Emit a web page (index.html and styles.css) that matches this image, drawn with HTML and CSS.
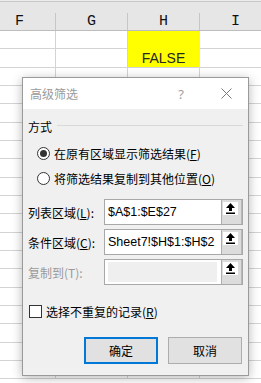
FILE: index.html
```html
<!DOCTYPE html>
<html lang="zh-CN">
<head>
    <meta charset="UTF-8">
    <title>高级筛选</title>
    <link rel="stylesheet" href="styles.css">
</head>
<body>
  <div class="sheet">
    <div class="sheet-top"></div>
    <div class="col-head">
      <div class="ch">F</div><div class="ch">G</div><div class="ch">H</div><div class="ch">I</div>
    </div>
    <div class="row"><div class="cell"></div><div class="cell"></div><div class="cell fill first"></div><div class="cell"></div></div>
    <div class="row"><div class="cell"></div><div class="cell"></div><div class="cell fill cell-text">FALSE</div><div class="cell"></div></div>
    <div class="row"><div class="cell"></div><div class="cell"></div><div class="cell"></div><div class="cell"></div></div>
    <div class="row"><div class="cell"></div><div class="cell"></div><div class="cell"></div><div class="cell"></div></div>
    <div class="row"><div class="cell"></div><div class="cell"></div><div class="cell"></div><div class="cell"></div></div>
    <div class="row"><div class="cell"></div><div class="cell"></div><div class="cell"></div><div class="cell"></div></div>
    <div class="row"><div class="cell"></div><div class="cell"></div><div class="cell"></div><div class="cell"></div></div>
    <div class="row"><div class="cell"></div><div class="cell"></div><div class="cell"></div><div class="cell"></div></div>
    <div class="row"><div class="cell"></div><div class="cell"></div><div class="cell"></div><div class="cell"></div></div>
    <div class="row"><div class="cell"></div><div class="cell"></div><div class="cell"></div><div class="cell"></div></div>
    <div class="row"><div class="cell"></div><div class="cell"></div><div class="cell"></div><div class="cell"></div></div>
    <div class="row"><div class="cell"></div><div class="cell"></div><div class="cell"></div><div class="cell"></div></div>
    <div class="row"><div class="cell"></div><div class="cell"></div><div class="cell"></div><div class="cell"></div></div>
    <div class="row"><div class="cell"></div><div class="cell"></div><div class="cell"></div><div class="cell"></div></div>
    <div class="row"><div class="cell"></div><div class="cell"></div><div class="cell"></div><div class="cell"></div></div>
    <div class="row"><div class="cell"></div><div class="cell"></div><div class="cell"></div><div class="cell"></div></div>
    <div class="row"><div class="cell"></div><div class="cell"></div><div class="cell"></div><div class="cell"></div></div>
    <div class="row"><div class="cell"></div><div class="cell"></div><div class="cell"></div><div class="cell"></div></div>
    <div class="row"><div class="cell"></div><div class="cell"></div><div class="cell"></div><div class="cell"></div></div>
  </div>

  <div class="dialog">
    <div class="dlg-title">
      <span>高级筛选</span>
      <span class="help">?</span>
      <span class="close">
        <svg width="11" height="11" viewBox="0 0 11 11"><path d="M0.5 0.5 L10.5 10.5 M10.5 0.5 L0.5 10.5" stroke="#7a7a7a" stroke-width="1" fill="none"/></svg>
      </span>
    </div>

    <div class="dlg-body">
      <div class="group-head">
        <span>方式</span>
        <span class="group-line"></span>
      </div>

      <div class="opt first">
        <span class="radio on"></span>
        <span class="opt-text">在原有区域显示筛选结果(<u>F</u>)</span>
      </div>
      <div class="opt">
        <span class="radio"></span>
        <span class="opt-text">将筛选结果复制到其他位置(<u>O</u>)</span>
      </div>

      <div class="field-row first">
        <span class="label">列表区域(<u>L</u>):</span>
        <div class="field">
          <span class="val">$A$1:$E$27</span>
          <span class="pick"><span class="pick-face"><svg width="9" height="11" viewBox="0 0 9 11"><path d="M4.5 0 L9 5 H6 V8 H3 V5 H0 Z" fill="#000"/><rect x="0" y="9.5" width="9" height="1.5" fill="#000"/></svg></span></span>
        </div>
      </div>
      <div class="field-row">
        <span class="label">条件区域(<u>C</u>):</span>
        <div class="field">
          <span class="val">Sheet7!$H$1:$H$2</span>
          <span class="pick"><span class="pick-face"><svg width="9" height="11" viewBox="0 0 9 11"><path d="M4.5 0 L9 5 H6 V8 H3 V5 H0 Z" fill="#000"/><rect x="0" y="9.5" width="9" height="1.5" fill="#000"/></svg></span></span>
        </div>
      </div>
      <div class="field-row off">
        <span class="label">复制到(T):</span>
        <div class="field">
          <span class="val"></span>
          <span class="pick"><span class="pick-face"><svg width="9" height="11" viewBox="0 0 9 11"><path d="M4.5 0 L9 5 H6 V8 H3 V5 H0 Z" fill="#000"/><rect x="0" y="9.5" width="9" height="1.5" fill="#000"/></svg></span></span>
        </div>
      </div>

      <div class="check-row">
        <span class="check"></span>
        <span class="check-text">选择不重复的记录(<u>R</u>)</span>
      </div>

      <div class="buttons">
        <div class="btn ok">确定</div>
        <div class="btn">取消</div>
      </div>
    </div>
  </div>
</body>
</html>
```

FILE: styles.css
```css
    body {
        margin: 0;
        width: 261px;
        height: 383px;
        overflow: hidden;
        background-color: #ffffff;
        position: relative;
    }
    .sheet {
        overflow: hidden;
    }
    .sheet-top {
        height: 11px;
        margin-top: 1px;
        border-top: 1px solid #c8c8c8;
        background-color: #e6e6e6;
        box-shadow: 0 -1px 0 #ececec;
    }
    .col-head {
        display: flex;
        margin-left: -16px;
        height: 18px;
        box-sizing: border-box;
        background-color: #e6e6e6;
        border-bottom: 1px solid #bdbdbd;
    }
    .ch {
        flex: none;
        width: 72px;
        box-sizing: border-box;
        border-right: 1px solid #c6c6c6;
        text-align: center;
        font-family: "Liberation Mono", monospace;
        font-size: 15px;
        line-height: 18px;
        color: #111;
    }
    .row {
        display: flex;
        margin-left: -16px;
        height: 18.33px;
    }
    .cell {
        flex: none;
        width: 72px;
        box-sizing: border-box;
        border-right: 1px solid #d4d4d4;
        border-bottom: 1px solid #d4d4d4;
    }
    .cell.fill {
        background-color: #ffff00;
        border-right-color: #ffff00;
    }
    .cell.fill.first {
        border-bottom-color: #ffff00;
    }
    .cell-text {
        font-family: "Liberation Sans", Arial, sans-serif;
        font-size: 14px;
        line-height: 18px;
        text-align: center;
        color: #262626;
    }

    /* dialog */
    .dialog {
        position: absolute;
        left: 22px;
        top: 77px;
        width: 227px;
        height: 299px;
        box-sizing: border-box;
        border: 1px solid #9a9a9a;
        background-color: #f0f0f0;
        box-shadow: 0 2px 10px rgba(0, 0, 0, 0.28);
        font-family: "Noto Sans CJK SC", "Noto Sans", sans-serif;
        font-size: 12px;
        color: #000;
    }
    .dlg-title {
        display: flex;
        align-items: center;
        height: 31px;
        padding: 0 7px 0 7px;
        background-color: #ffffff;
        color: #9a9a9a;
    }
    .help {
        margin-left: auto;
        width: 30px;
        text-align: center;
        font-family: "Noto Sans", sans-serif;
        font-size: 13px;
        color: #a0a0a0;
    }
    .close {
        width: 30px;
        margin-left: 15px;
        display: flex;
        justify-content: center;
    }
    .dlg-body {
        padding: 0 5px 0 5px;
    }
    .group-head {
        display: flex;
        align-items: center;
        height: 14px;
        margin-top: 11px;
        line-height: 14px;
    }
    .group-line {
        flex: 1;
        height: 1px;
        margin: 0 0 3px 5px;
        background-color: #d9d9d9;
    }
    .opt {
        display: flex;
        align-items: center;
        height: 16px;
        margin: 9px 0 0 9px;
    }
    .opt.first {
        margin-top: 11px;
    }
    .radio {
        flex: none;
        width: 13px;
        height: 13px;
        box-sizing: border-box;
        border: 1px solid #333;
        border-radius: 50%;
        background-color: #fff;
        display: flex;
        align-items: center;
        justify-content: center;
    }
    .radio.on::after {
        content: "";
        width: 7px;
        height: 7px;
        border-radius: 50%;
        background-color: #333;
    }
    .opt-text {
        margin-left: 4px;
        white-space: nowrap;
    }
    .field-row {
        display: flex;
        align-items: center;
        height: 26px;
        margin-top: 4px;
    }
    .field-row.first {
        margin-top: 13px;
    }
    .label {
        width: 76px;
        flex: none;
        white-space: nowrap;
    }
    .field-row.off .label {
        color: #9a9a9a;
    }
    .field {
        flex: 1;
        display: flex;
        height: 26px;
        box-sizing: border-box;
        border: 1px solid #a8a8a8;
        background-color: #ffffff;
        overflow: hidden;
    }
    .val {
        flex: 1;
        padding-left: 3px;
        font-family: "Liberation Sans", Arial, sans-serif;
        font-size: 12.5px;
        line-height: 24px;
        white-space: nowrap;
        overflow: hidden;
    }
    .field-row.off .val {
        margin: 2px 4px 2px 3px;
        padding: 0;
        background-color: #efefef;
    }
    .pick {
        flex: none;
        width: 21px;
        box-sizing: border-box;
        padding: 2px 0 0 1px;
        background-color: #dcdcdc;
        border-left: 1px solid #adadad;
        border-right: 1px solid #b8b8b8;
    }
    .pick-face {
        display: flex;
        align-items: center;
        justify-content: center;
        width: 15px;
        height: 13px;
        background-color: #ffffff;
    }
    .check-row {
        display: flex;
        align-items: center;
        height: 13px;
        margin: 20px 0 0 1px;
    }
    .check {
        flex: none;
        width: 13px;
        height: 13px;
        box-sizing: border-box;
        border: 1px solid #333;
        background-color: #fff;
    }
    .check-text {
        margin-left: 4px;
        white-space: nowrap;
    }
    .buttons {
        display: flex;
        justify-content: flex-end;
        gap: 10px;
        margin: 19px 1px 0 0;
    }
    .btn {
        width: 74px;
        height: 27px;
        box-sizing: border-box;
        border: 1px solid #adadad;
        background-color: #e1e1e1;
        display: flex;
        align-items: center;
        justify-content: center;
    }
    .btn.ok {
        border: 2px solid #0078d7;
    }
```
